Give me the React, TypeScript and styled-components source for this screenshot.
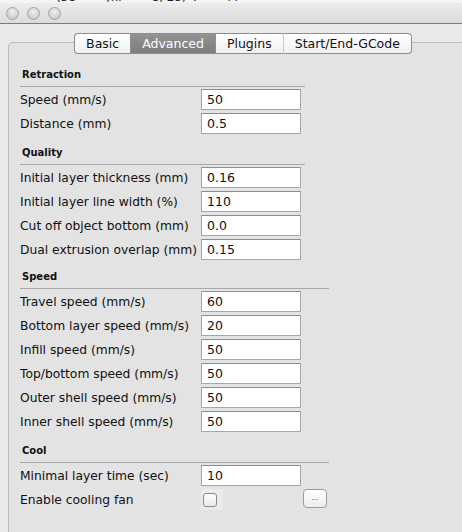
import React from 'react';
import styled, { createGlobalStyle } from 'styled-components';

const GlobalStyle = createGlobalStyle`
    html, body {
        margin: 0;
        padding: 0;
        background: #e8e8e8;
        font-family: "DejaVu Sans", "Liberation Sans", sans-serif;
        overflow: hidden;
    }
`;

interface RowData {
    label: string;
    value: string;
}

interface SectionData {
    title: string;
    space: number;
    lineWidth: number;
    rows: RowData[];
}

const sections: SectionData[] = [
    {
        title: 'Retraction',
        space: 13,
        lineWidth: 285,
        rows: [
            { label: 'Speed (mm/s)', value: '50' },
            { label: 'Distance (mm)', value: '0.5' },
        ],
    },
    {
        title: 'Quality',
        space: 11,
        lineWidth: 285,
        rows: [
            { label: 'Initial layer thickness (mm)', value: '0.16' },
            { label: 'Initial layer line width (%)', value: '110' },
            { label: 'Cut off object bottom (mm)', value: '0.0' },
            { label: 'Dual extrusion overlap (mm)', value: '0.15' },
        ],
    },
    {
        title: 'Speed',
        space: 9,
        lineWidth: 309,
        rows: [
            { label: 'Travel speed (mm/s)', value: '60' },
            { label: 'Bottom layer speed (mm/s)', value: '20' },
            { label: 'Infill speed (mm/s)', value: '50' },
            { label: 'Top/bottom speed (mm/s)', value: '50' },
            { label: 'Outer shell speed (mm/s)', value: '50' },
            { label: 'Inner shell speed (mm/s)', value: '50' },
        ],
    },
];

const tabs = ['Basic', 'Advanced', 'Plugins', 'Start/End-GCode'];

const App: React.FC = () => {
    return (
        <>
            <GlobalStyle />
            <Window>
                <BehindStrip>
                    <span>(38</span>
                    <span>)hl</span>
                    <span>8, 25, 4</span>
                    <span>l l</span>
                </BehindStrip>
                <TitleBar>
                    <Light />
                    <Light />
                    <Light />
                </TitleBar>
                <Body>
                    <GroupBox>
                        <Tabs>
                            {tabs.map((t, i) => (
                                <Tab key={t} active={t === 'Advanced'} first={i === 0} last={i === tabs.length - 1}>
                                    {t}
                                </Tab>
                            ))}
                        </Tabs>
                        <Form>
                            {sections.map(s => (
                                <Section key={s.title}>
                                    <Header space={s.space} lineWidth={s.lineWidth}>{s.title}</Header>
                                    <Rows>
                                        {s.rows.map(r => (
                                            <Row key={r.label}>
                                                <Label>{r.label}</Label>
                                                <Field>{r.value}</Field>
                                            </Row>
                                        ))}
                                    </Rows>
                                </Section>
                            ))}
                            <Section>
                                <Header space={11} lineWidth={309}>Cool</Header>
                                <Rows>
                                    <Row>
                                        <Label>Minimal layer time (sec)</Label>
                                        <Field>10</Field>
                                    </Row>
                                    <Row>
                                        <Label>Enable cooling fan</Label>
                                        <CheckCell>
                                            <CheckBacking>
                                                <Check />
                                            </CheckBacking>
                                        </CheckCell>
                                        <MoreButton>...</MoreButton>
                                    </Row>
                                </Rows>
                            </Section>
                        </Form>
                    </GroupBox>
                </Body>
            </Window>
        </>
    );
};

export default App;

const Window = styled.div`
    width: 462px;
    height: 532px;
    display: flex;
    flex-direction: column;
    overflow: hidden;
`;

const BehindStrip = styled.div`
    height: 3px;
    background: #f4f4f4;
    overflow: hidden;
    display: flex;
    gap: 30px;
    padding-left: 56px;
    font-size: 12px;
    line-height: 12px;
    color: #222;
    & > span {
        margin-top: -9px;
    }
`;

const TitleBar = styled.div`
    height: 20px;
    flex-shrink: 0;
    display: flex;
    align-items: center;
    gap: 8px;
    padding-left: 6px;
    background: linear-gradient(#ececec, #dcdcdc);
    border-bottom: 1px solid #7c7c7c;
`;

const Light = styled.div`
    width: 11px;
    height: 11px;
    border-radius: 50%;
    border: 1px solid #a3a3a3;
    background: radial-gradient(circle at 50% 35%, #f0f0f0, #cfcfcf 70%);
`;

const Body = styled.div`
    flex: 1;
    padding: 18px 0 0 8px;
    background: #e9e9e9;
    overflow: hidden;
`;

const GroupBox = styled.div`
    width: 470px;
    height: 520px;
    box-sizing: border-box;
    border: 1px solid #bcbcbc;
    border-radius: 5px;
    background: #e3e3e3;
`;

const Tabs = styled.div`
    display: flex;
    justify-content: center;
    margin-top: -10px;
`;

const Tab = styled.div<{ active: boolean; first: boolean; last: boolean }>`
    height: 19px;
    line-height: 19px;
    padding: 0 11px;
    font-size: 12.5px;
    color: ${p => (p.active ? '#fff' : '#111')};
    background: ${p => (p.active ? 'linear-gradient(#939393, #7d7d7d)' : 'linear-gradient(#ffffff, #f1f1f1)')};
    border: 1px solid #8e8e8e;
    border-left: ${p => (p.first ? '1px solid #8e8e8e' : '1px solid #c9c9c9')};
    border-right: ${p => (p.last ? '1px solid #8e8e8e' : 'none')};
    border-radius: ${p => (p.first ? '4px 0 0 4px' : p.last ? '0 4px 4px 0' : '0')};
    ${p => p.active && 'border-left-color: #8e8e8e; & + div { border-left-color: #8e8e8e; }'}
`;

const Form = styled.div`
    padding-left: 11px;
`;

const Section = styled.div`
    display: flex;
    flex-direction: column;
`;

const Header = styled.div<{ space: number; lineWidth: number }>`
    margin-top: ${p => p.space}px;
    width: ${p => p.lineWidth}px;
    box-sizing: border-box;
    padding: 0 0 3px 2px;
    line-height: 16px;
    font-size: 10px;
    font-weight: bold;
    color: #111;
    border-bottom: 1px solid #a9a9a9;
    margin-bottom: 2px;
`;

const Rows = styled.div`
    display: flex;
    flex-direction: column;
    gap: 3px;
`;

const Row = styled.div`
    display: flex;
    align-items: center;
    height: 21px;
`;

const Label = styled.div`
    width: 181px;
    flex-shrink: 0;
    font-size: 12.3px;
    color: #111;
    white-space: nowrap;
`;

const Field = styled.div`
    width: 100px;
    height: 21px;
    box-sizing: border-box;
    background: #fff;
    border: 1px solid #a6a6a6;
    border-top-color: #8f8f8f;
    padding-left: 5px;
    font-size: 12.5px;
    line-height: 20px;
    color: #111;
`;

const CheckCell = styled.div`
    width: 100px;
    height: 21px;
    display: flex;
`;

const CheckBacking = styled.div`
    width: 22px;
    height: 21px;
    background: #ececec;
    display: flex;
    align-items: center;
    padding-left: 2px;
    box-sizing: border-box;
`;

const Check = styled.div`
    width: 14px;
    height: 14px;
    box-sizing: border-box;
    border: 1px solid #8a8a8a;
    border-radius: 3px;
    background: linear-gradient(#ffffff, #e9e9e9);
`;

const MoreButton = styled.div`
    align-self: flex-start;
    margin-left: 2px;
    width: 24px;
    height: 19px;
    box-sizing: border-box;
    border: 1px solid #9c9c9c;
    border-radius: 4px;
    background: linear-gradient(#ffffff, #ededed);
    font-size: 7px;
    line-height: 17px;
    text-align: center;
    color: #333;
`;
